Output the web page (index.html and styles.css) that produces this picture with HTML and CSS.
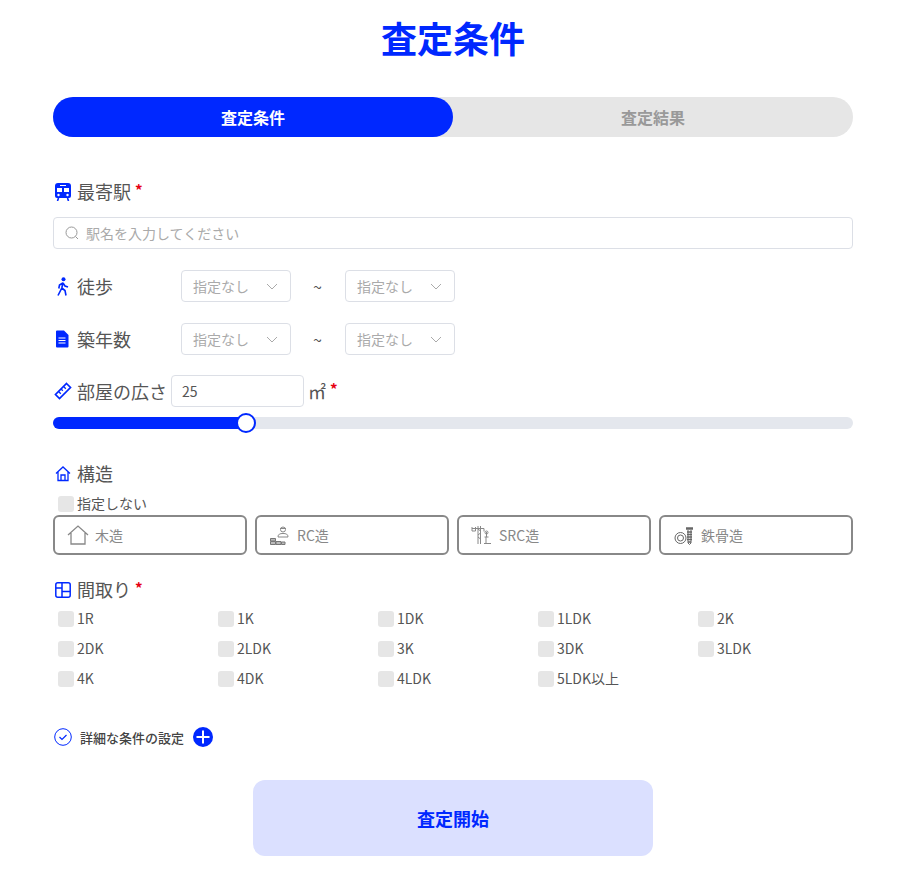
FILE: index.html
```html
<!DOCTYPE html>
<html lang="ja">
<head>
<meta charset="utf-8">
<title>査定条件</title>
<link rel="stylesheet" href="styles.css">
</head>
<body>
<div class="page">
  <h1 class="title">査定条件</h1>

  <div class="tabs">
    <div class="tab active">査定条件</div>
    <div class="tab">査定結果</div>
  </div>

  <div class="label station-label">
    <svg class="icon" width="16" height="18" viewBox="0 0 16 18"><path fill="#0028ff" d="M3 0h10a3 3 0 0 1 3 3v10a2 2 0 0 1-2 2H2a2 2 0 0 1-2-2V3a3 3 0 0 1 3-3z"/><path fill="#fff" d="M2 5h5v4H2zM9 5h5v4H9zM5 2h6v1H5z"/><circle cx="3.500" cy="12" r="1.200" fill="#fff"/><circle cx="12.500" cy="12" r="1.200" fill="#fff"/><path fill="none" stroke="#0028ff" stroke-width="1.600" d="M3.500 15l-1 3M12.500 15l1 3"/></svg>
    <span class="label-text">最寄駅</span><span class="req">*</span>
  </div>
  <div class="search">
    <svg width="14" height="14" viewBox="0 0 14 14" fill="none" stroke="#999" stroke-width="1"><circle cx="6.500" cy="6.500" r="5.500"/><path d="M10.500 10.500l2.500 2.500"/></svg>
    <span>駅名を入力してください</span>
  </div>

  <div class="range-row walk-row">
    <div class="range-label">
      <svg class="icon" width="16" height="19" viewBox="0 0 16 19"><circle cx="8.500" cy="2.200" r="2" fill="#0028ff"/><path fill="none" stroke="#0028ff" stroke-width="1.600" d="M8 5.500L6.800 11 3 18.500M6.800 11L10 13.500l1 5M7.800 6L4.500 8l-.7 3.500M8 6l2 3 3 1"/></svg>
      <span>徒歩</span>
    </div>
    <div class="select">指定なし<svg width="12" height="7" viewBox="0 0 12 7" fill="none" stroke="#aaa"><path d="M1 1l5 5 5-5"/></svg></div>
    <div class="tilde">~</div>
    <div class="select">指定なし<svg width="12" height="7" viewBox="0 0 12 7" fill="none" stroke="#aaa"><path d="M1 1l5 5 5-5"/></svg></div>
  </div>

  <div class="range-row age-row">
    <div class="range-label">
      <svg class="icon" width="16" height="18" viewBox="0 0 16 18"><path fill="#0028ff" d="M2 .5h7l4.500 4.500v11.500a1 1 0 0 1-1 1H2a1 1 0 0 1-1-1v-15a1 1 0 0 1 1-1z"/><path stroke="#fff" d="M3.500 8h7M3.500 10.500h7M3.500 13h7"/></svg>
      <span>築年数</span>
    </div>
    <div class="select">指定なし<svg width="12" height="7" viewBox="0 0 12 7" fill="none" stroke="#aaa"><path d="M1 1l5 5 5-5"/></svg></div>
    <div class="tilde">~</div>
    <div class="select">指定なし<svg width="12" height="7" viewBox="0 0 12 7" fill="none" stroke="#aaa"><path d="M1 1l5 5 5-5"/></svg></div>
  </div>

  <div class="size-row">
    <svg class="ruler" width="18" height="18" viewBox="0 0 18 18" fill="none" stroke="#0028ff" stroke-width="1.700"><path d="M12.500 1.500l4 4L5.500 16.500l-4-4z"/><path stroke-width="1.300" d="M4.800 9.800l2 2M7.300 7.300l1.500 1.500M9.800 4.800l2 2"/></svg>
    <span class="size-text">部屋の広さ</span>
    <div class="size-input">25</div>
    <span class="size-unit">㎡</span><span class="req">*</span>
  </div>
  <div class="slider">
    <div class="slider-fill"></div>
    <div class="slider-thumb"></div>
  </div>

  <div class="label kozo-label">
    <svg class="icon" width="16" height="16" viewBox="0 0 16 16" fill="none" stroke="#0028ff" stroke-width="1.300"><path d="M1 7.500L8 1l7 6.500M3 6v8.500h10V6M6 14.500V9h4v5.500"/></svg>
    <span class="label-text">構造</span>
  </div>
  <label class="check no-kozo"><span class="box"></span><span class="check-text">指定しない</span></label>
  <div class="kozo-list">
    <div class="kozo">
      <svg width="22" height="20" viewBox="0 0 22 20" fill="none" stroke="#888" stroke-width="1.300"><path d="M1 10L11 1l10 9M4 8v11h14V8"/></svg>
      <span>木造</span>
    </div>
    <div class="kozo">
      <svg width="22" height="20" viewBox="0 0 22 20" fill="none" stroke="#888"><circle cx="14" cy="4.500" r="2.500"/><path d="M11 3.500h6M9 12c0-3 2-3.500 5-3.500s5 .5 5 3.500z"/><path stroke="#777" fill="#bbb" d="M1.500 13.500h5v2.500h-5zM1.500 16.500h5v3h-5zM7 16.500h5v3H7zM12.500 17h3.500v2.500h-3.500z"/></svg>
      <span>RC造</span>
    </div>
    <div class="kozo">
      <svg width="22" height="20" viewBox="0 0 22 20" fill="none" stroke="#888"><path d="M1 3.500h12M1 2v4h3.500V2M7 1v18M9.500 1v18M7 4l2.500 2M9.500 8L7 10M7 12l2.500 2M13 3.500v3M13.500 12h4M15.500 7v5M13 18.500h7M15 12v6.500"/><circle cx="15.500" cy="7.500" r="1.500"/></svg>
      <span>SRC造</span>
    </div>
    <div class="kozo">
      <svg width="22" height="20" viewBox="0 0 22 20" fill="none" stroke="#666"><circle cx="7.500" cy="13" r="5.500"/><circle cx="7.500" cy="13" r="3"/><path stroke-width="2.500" d="M13 3.500h7"/><path stroke-width="1.500" d="M14 7h5M14 9.500h5M14 12h5M14 14.500h5M15 17h3"/><path d="M15 5v13l1.500 1.500L18 18V5"/></svg>
      <span>鉄骨造</span>
    </div>
  </div>

  <div class="label madori-label">
    <svg class="icon" width="16" height="16" viewBox="0 0 16 16" fill="none" stroke="#0028ff" stroke-width="1.500"><rect x=".8" y=".8" width="14.400" height="14.400" rx="2"/><path d="M7 1v14M1 6h6M7 9.500h8"/></svg>
    <span class="label-text">間取り</span><span class="req">*</span>
  </div>
  <div class="madori-list">
    <label class="check"><span class="box"></span><span class="check-text">1R</span></label>
    <label class="check"><span class="box"></span><span class="check-text">1K</span></label>
    <label class="check"><span class="box"></span><span class="check-text">1DK</span></label>
    <label class="check"><span class="box"></span><span class="check-text">1LDK</span></label>
    <label class="check"><span class="box"></span><span class="check-text">2K</span></label>
    <label class="check"><span class="box"></span><span class="check-text">2DK</span></label>
    <label class="check"><span class="box"></span><span class="check-text">2LDK</span></label>
    <label class="check"><span class="box"></span><span class="check-text">3K</span></label>
    <label class="check"><span class="box"></span><span class="check-text">3DK</span></label>
    <label class="check"><span class="box"></span><span class="check-text">3LDK</span></label>
    <label class="check"><span class="box"></span><span class="check-text">4K</span></label>
    <label class="check"><span class="box"></span><span class="check-text">4DK</span></label>
    <label class="check"><span class="box"></span><span class="check-text">4LDK</span></label>
    <label class="check"><span class="box"></span><span class="check-text">5LDK以上</span></label>
  </div>

  <div class="detail">
    <svg width="18" height="18" viewBox="0 0 18 18" fill="none" stroke="#0028ff"><circle cx="9" cy="9" r="8.300"/><path stroke-width="1.200" d="M5.500 9l2.500 2.500 4.500-4.500"/></svg>
    <span class="detail-text">詳細な条件の設定</span>
    <svg width="20" height="20" viewBox="0 0 20 20"><circle cx="10" cy="10" r="10" fill="#0028ff"/><path stroke="#fff" stroke-width="2" d="M10 3.500v13M3.500 10h13"/></svg>
  </div>

  <div class="submit">査定開始</div>
</div>
</body>
</html>
```

FILE: styles.css
```css
* {
  box-sizing: border-box;
}

body {
  margin: 0;
  background: #fff;
  color: #555;
  font-family: "Noto Sans CJK JP", "Noto Sans", sans-serif;
}

.page {
  width: 800px;
  margin-left: 53px;
  padding-bottom: 33px;
}

.title {
  margin: 0;
  padding-top: 11px;
  height: 97px;
  font-size: 36px;
  line-height: 52px;
  font-weight: 700;
  text-align: center;
  color: #0028ff;
}

.tabs {
  display: flex;
  height: 40px;
  border-radius: 20px;
  background: #e6e6e6;
}

.tab {
  width: 400px;
  border-radius: 20px;
  font-size: 16px;
  font-weight: 700;
  line-height: 40px;
  text-align: center;
  color: #999;
}

.tab.active {
  background: #0028ff;
  color: #fff;
}

.label {
  display: flex;
  align-items: center;
  height: 26px;
  font-size: 18px;
}

.label-text {
  margin-bottom: 2px;
}

.icon {
  margin: 0 6px 0 2px;
  flex: none;
}

.req {
  margin: -5px 0 0 4px;
  font-size: 15px;
  font-weight: 700;
  color: #e60012;
}

.station-label {
  margin-top: 42px;
}

.search {
  display: flex;
  align-items: center;
  gap: 7px;
  height: 32px;
  margin-top: 12px;
  padding-left: 11px;
  border: 1px solid #dcdfe6;
  border-radius: 4px;
  font-size: 14px;
  color: #aaa;
}

.range-row {
  display: flex;
  align-items: center;
  height: 32px;
  font-size: 14px;
}

.walk-row {
  margin-top: 21px;
}

.age-row {
  margin-top: 21px;
}

.range-label {
  display: flex;
  align-items: center;
  width: 128px;
  font-size: 18px;
}

.select {
  display: flex;
  align-items: center;
  justify-content: space-between;
  width: 110px;
  height: 32px;
  padding: 0 12px 0 11px;
  border: 1px solid #dcdfe6;
  border-radius: 4px;
  color: #aaa;
}

.tilde {
  width: 53px;
  margin-right: 1px;
  font-size: 16px;
  text-align: center;
  color: #555;
}

.size-row {
  display: flex;
  align-items: center;
  height: 32px;
  margin-top: 20px;
  font-size: 18px;
}

.ruler {
  margin-left: 1px;
  margin-right: 5px;
}

.size-text {
  width: 94px;
}

.size-input {
  width: 133px;
  height: 32px;
  padding-left: 10px;
  border: 1px solid #dcdfe6;
  border-radius: 4px;
  font-size: 14px;
  line-height: 30px;
}

.size-unit {
  margin-left: 4px;
}

.slider {
  position: relative;
  height: 12px;
  margin-top: 10px;
  border-radius: 6px;
  background: #e4e7ed;
}

.slider-fill {
  width: 193px;
  height: 12px;
  border-radius: 6px 0 0 6px;
  background: #0028ff;
}

.slider-thumb {
  position: absolute;
  left: 183px;
  top: -4px;
  width: 20px;
  height: 20px;
  border: 2px solid #0028ff;
  border-radius: 50%;
  background: #fff;
}

.kozo-label {
  margin-top: 32px;
}

.check {
  display: flex;
  align-items: center;
  gap: 3px;
  height: 16px;
  padding-left: 5px;
  font-size: 14px;
}

.check-text {
  margin-bottom: 2px;
}

.box {
  width: 16px;
  height: 16px;
  border-radius: 3px;
  background: #e6e6e6;
}

.no-kozo {
  margin-top: 9px;
}

.kozo-list {
  display: grid;
  grid-template-columns: repeat(4, 1fr);
  gap: 8px;
  margin-top: 3px;
}

.kozo {
  display: flex;
  align-items: center;
  gap: 6px;
  height: 40px;
  padding-left: 12px;
  border: 2px solid #888;
  border-radius: 6px;
  font-size: 14px;
  color: #888;
}

.kozo svg {
  flex: none;
}

.madori-label {
  margin-top: 22px;
}

.madori-list {
  display: grid;
  grid-template-columns: repeat(5, 160px);
  row-gap: 14px;
  margin-top: 8px;
}

.detail {
  display: flex;
  align-items: center;
  height: 20px;
  margin-top: 40px;
  padding-left: 1px;
}

.detail-text {
  margin: 0 9px 0 8px;
  font-size: 13px;
  font-weight: 500;
  color: #444;
}

.submit {
  width: 400px;
  height: 76px;
  margin: 33px auto 0;
  border-radius: 12px;
  background: #dbe0ff;
  font-size: 18px;
  font-weight: 700;
  line-height: 76px;
  text-align: center;
  color: #0028ff;
}
```
